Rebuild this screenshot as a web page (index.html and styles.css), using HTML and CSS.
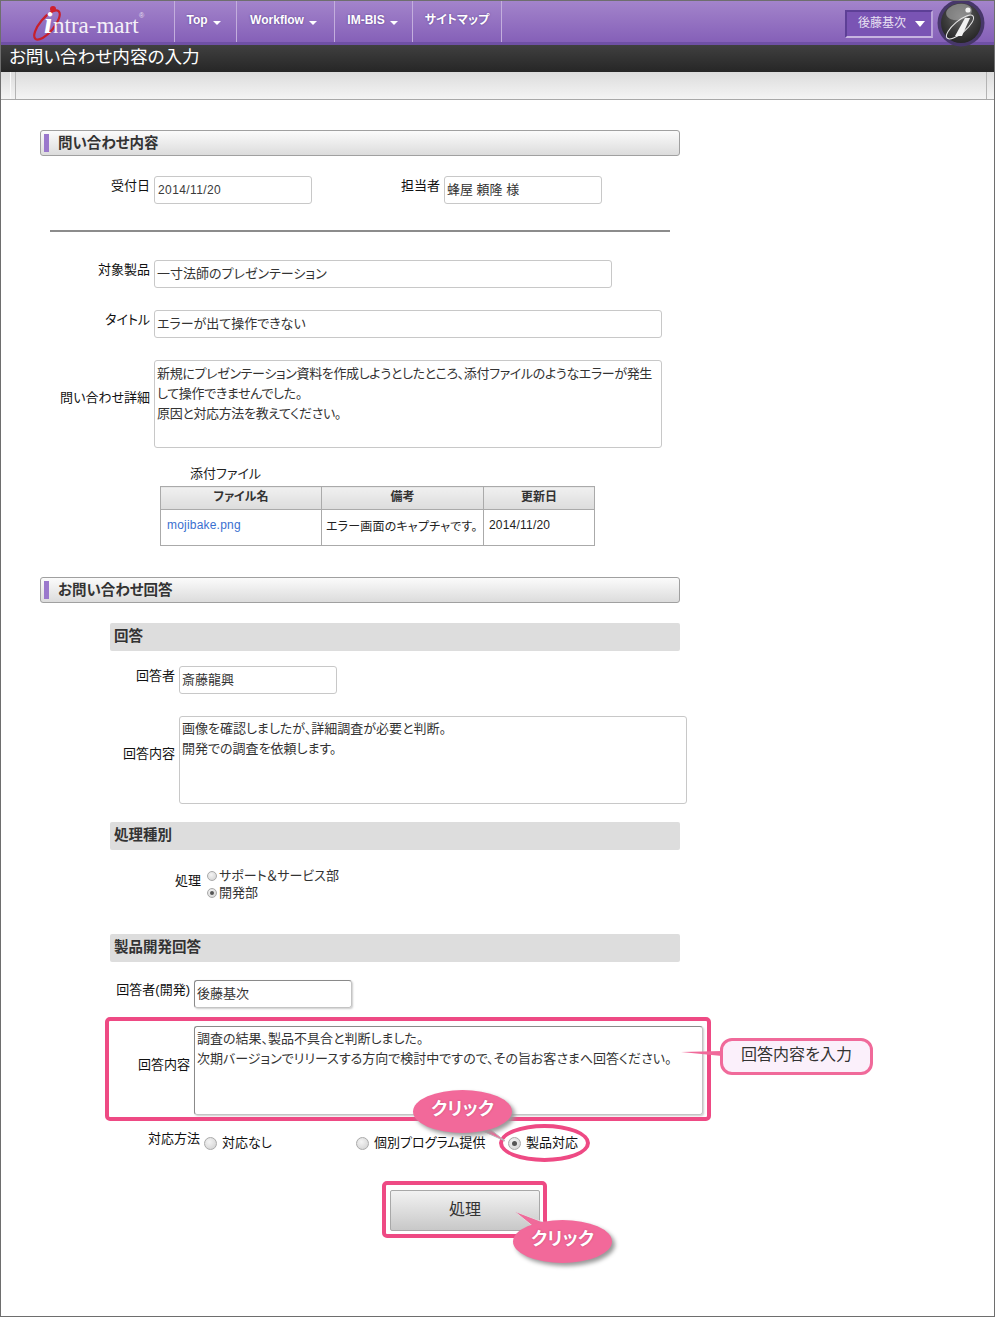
FILE: index.html
```html
<html>

<head>
    <meta charset="utf-8" />
    <link rel="stylesheet" href="styles.css">
</head>

<body>
    <div class="page">
        <div class="header">
            <div class="logo">
                <svg width="130" height="38" viewBox="0 0 130 38">
                    <ellipse cx="24" cy="22" rx="7" ry="18" transform="rotate(40 24 22)" fill="none" stroke="#c8202c" stroke-width="2.2" />
                    <circle cx="30" cy="6" r="3" fill="#d0202c" />
                    <text x="21" y="30" class="logo-i">i</text>
                    <text x="30" y="30" class="logo-text">ntra-mart</text>
                    <text x="116" y="15" class="logo-reg">®</text>
                </svg>
            </div>
            <div class="nav">
                <div class="nav-item nav-top">Top<span class="caret"></span></div>
                <div class="nav-item nav-workflow">Workflow<span class="caret"></span></div>
                <div class="nav-item nav-bis">IM-BIS<span class="caret"></span></div>
                <div class="nav-item nav-map">サイトマップ</div>
            </div>
            <div class="user">
                <div class="user-box">後藤基次<span class="user-caret"></span></div>
                <svg class="user-icon" width="50" height="48" viewBox="0 0 50 48">
                    <defs>
                        <radialGradient id="ball" cx="50%" cy="35%" r="65%">
                            <stop offset="0" stop-color="#6a6a6a" />
                            <stop offset="0.6" stop-color="#3c3c3c" />
                            <stop offset="1" stop-color="#252525" />
                        </radialGradient>
                    </defs>
                    <circle cx="25" cy="23" r="23.5" fill="#47376a" />
                    <circle cx="25" cy="23" r="20" fill="url(#ball)" />
                    <ellipse cx="23" cy="12" rx="13" ry="8" transform="rotate(-10 23 12)" fill="#a8a8a8" opacity="0.6" />
                    <ellipse cx="24" cy="27" rx="6" ry="17" transform="rotate(50 24 27)" fill="none" stroke="#e8e8e8" stroke-width="1" />
                    <path d="M29 18 L34 18 L26 36 L19 36 Z" fill="#f2f2f2" />
                    <circle cx="32" cy="10" r="2.6" fill="#f2f2f2" />
                </svg>
            </div>
        </div>
        <div class="title-bar">お問い合わせ内容の入力</div>
        <div class="toolbar">
            <span class="tool-left"></span>
            <span class="tool-right"></span>
        </div>

        <div class="content">
            <div class="section-head">問い合わせ内容</div>

            <div class="row row-first">
                <div class="label w114">受付日</div>
                <div class="field w158 num">2014/11/20</div>
                <div class="label w100 gap32">担当者</div>
                <div class="field w158">蜂屋 頼隆 様</div>
            </div>
            <div class="rule"></div>
            <div class="row row-product">
                <div class="label w114">対象製品</div>
                <div class="field w458">一寸法師のプレゼンテーション</div>
            </div>
            <div class="row row-gap">
                <div class="label w114">タイトル</div>
                <div class="field w508">エラーが出て操作できない</div>
            </div>
            <div class="row row-gap row-center">
                <div class="label w114">問い合わせ詳細</div>
                <div class="field area tight w508">
                    新規にプレゼンテーション資料を作成しようとしたところ、添付ファイルのようなエラーが発生<br>
                    して操作できませんでした。<br>
                    原因と対応方法を教えてください。
                </div>
            </div>

            <div class="attach-label">添付ファイル</div>
            <table class="files">
                <tr>
                    <th class="col-name">ファイル名</th>
                    <th class="col-note">備考</th>
                    <th>更新日</th>
                </tr>
                <tr>
                    <td class="file-link">mojibake.png</td>
                    <td class="file-note">エラー画面のキャプチャです。</td>
                    <td>2014/11/20</td>
                </tr>
            </table>

            <div class="section-head section-answer">お問い合わせ回答</div>

            <div class="sub-head sub-first">回答</div>
            <div class="row row-sub">
                <div class="label w139">回答者</div>
                <div class="field w158">斎藤龍興</div>
            </div>
            <div class="row row-gap row-center">
                <div class="label w139">回答内容</div>
                <div class="field area w508">
                    画像を確認しましたが、詳細調査が必要と判断。<br>
                    開発での調査を依頼します。
                </div>
            </div>

            <div class="sub-head sub-type">処理種別</div>
            <div class="row row-radios">
                <div class="label w165">処理</div>
                <div class="radio-stack">
                    <div class="radio-line"><span class="radio small"></span>サポート＆サービス部</div>
                    <div class="radio-line"><span class="radio small on"></span>開発部</div>
                </div>
            </div>

            <div class="sub-head sub-dev">製品開発回答</div>
            <div class="row row-dev">
                <div class="label w154">回答者(開発)</div>
                <div class="field w158 dark">後藤基次</div>
            </div>
            <div class="row row-dev-area row-center">
                <div class="label w154">回答内容</div>
                <div class="field area w509 dark">
                    調査の結果、製品不具合と判断しました。<br>
                    次期バージョンでリリースする方向で検討中ですので、その旨お客さまへ回答ください。
                </div>
            </div>

            <div class="row row-method">
                <div class="label w164">対応方法</div>
                <div class="choice choice-a"><span class="radio"></span>対応なし</div>
                <div class="choice choice-b"><span class="radio"></span>個別プログラム提供</div>
                <div class="choice"><span class="radio on"></span>製品対応</div>
            </div>

            <div class="action">
                <div class="button">処理</div>
            </div>
        </div>

        <!-- annotations over the form -->
        <div class="mark mark-answer"></div>
        <div class="mark mark-button"></div>
        <div class="mark-oval"></div>
        <svg class="tails" width="995" height="1317" viewBox="0 0 995 1317">
            <path d="M681 1052 L722 1051 L722 1056 Z" fill="#f06a9a" />
            <path d="M486 1126 L505 1141 L476 1128 Z" fill="#f06a9a" stroke="#bbb" stroke-width="1" />
            <path d="M514 1211 L548 1224 L535 1228 Z" fill="#f06a9a" stroke="#ddd" stroke-width="1" />
        </svg>
        <div class="note">回答内容を入力</div>
        <div class="bubble bubble-a">クリック</div>
        <div class="bubble bubble-b">クリック</div>
    </div>
</body>

</html>
```

FILE: styles.css
```css
body {
    margin: 0;
    background: #fff;
    font-family: "Liberation Sans", "Noto Sans CJK JP", sans-serif;
    font-size: 13px;
    font-feature-settings: "palt";
    color: #222;
}

.page {
    position: relative;
    box-sizing: border-box;
    width: 995px;
    height: 1317px;
    border: 1px solid #6e6e6e;
    overflow: hidden;
}

/* header */
.header {
    display: flex;
    height: 41px;
    border-bottom: 3px solid #6f50a5;
    background: linear-gradient(#a384cb, #8560b8);
}

.logo {
    width: 173px;
    height: 41px;
}

.logo svg {
    display: block;
    margin-left: 22px;
    margin-top: 2px;
}

.logo-i {
    font-family: "Liberation Serif", serif;
    font-size: 30px;
    font-style: italic;
    font-weight: bold;
    fill: #fff;
}

.logo-text {
    font-family: "Liberation Serif", serif;
    font-size: 23px;
    fill: #f4f0f8;
}

.logo-reg {
    font-size: 7px;
    fill: #e8e0f0;
}

.nav {
    display: flex;
    border-left: 1px solid #c3aedd;
}

.nav-item {
    box-sizing: border-box;
    padding-top: 11px;
    border-right: 1px solid #c3aedd;
    color: #fff;
    font-size: 12px;
    font-weight: bold;
    line-height: 16px;
    text-align: center;
    text-shadow: 0 0 2px #5b3f8c;
}

.nav-top {
    width: 62px;
    padding-right: 4px;
}

.nav-workflow {
    width: 98px;
    padding-right: 4px;
}

.nav-bis {
    width: 78px;
    padding-right: 2px;
}

.nav-map {
    width: 89px;
}

.caret {
    display: inline-block;
    margin-left: 5px;
    border-top: 4px solid #fff;
    border-left: 4px solid transparent;
    border-right: 4px solid transparent;
    vertical-align: -1px;
}

.user {
    display: flex;
    margin-left: auto;
    padding-right: 8px;
}

.user-box {
    box-sizing: border-box;
    width: 88px;
    height: 28px;
    margin-top: 9px;
    padding-left: 11px;
    border: 2px solid #5d3f96;
    border-bottom-color: #c7b4e0;
    border-right-color: #b9a3d8;
    background: #7a54b4;
    color: #e8e0f2;
    font-size: 12px;
    line-height: 23px;
}

.user-caret {
    display: inline-block;
    margin-left: 9px;
    border-top: 6px solid #fff;
    border-left: 5px solid transparent;
    border-right: 5px solid transparent;
    vertical-align: 0;
}

.user-icon {
    display: block;
    margin-left: 3px;
    margin-top: -1px;
    position: relative;
    z-index: 1;
}

.title-bar {
    box-sizing: border-box;
    height: 27px;
    padding-left: 8px;
    background: linear-gradient(#404040, #262626);
    color: #fff;
    font-size: 17.6px;
    line-height: 25px;
}

.toolbar {
    display: flex;
    justify-content: space-between;
    box-sizing: border-box;
    height: 28px;
    padding: 0 7px 0 9px;
    border-bottom: 1px solid #a8a8a8;
    background: linear-gradient(#dcdcdc, #f4f4f4);
}

.tool-left {
    width: 4px;
    border-left: 1px solid #fafafa;
    border-right: 1px solid #b4b4b4;
}

.tool-right {
    width: 0;
    border-left: 1px solid #b4b4b4;
}

/* content */
.content {
    padding: 30px 0 0 39px;
}

.section-head {
    box-sizing: border-box;
    width: 640px;
    height: 26px;
    padding-left: 17px;
    border: 1px solid #a0a0a0;
    border-radius: 3px;
    background: linear-gradient(#fbfbfb, #dcdcdc);
    color: #333;
    font-size: 14.5px;
    font-weight: bold;
    line-height: 24px;
    position: relative;
}

.section-head::before {
    content: "";
    position: absolute;
    left: 3px;
    top: 3px;
    width: 5px;
    height: 18px;
    background: #9a78cc;
}

.section-answer {
    margin-top: 31px;
}

.sub-head {
    box-sizing: border-box;
    width: 570px;
    height: 28px;
    margin-left: 70px;
    padding-left: 4px;
    border-radius: 2px;
    background: #dddddd;
    color: #333;
    font-size: 14.5px;
    font-weight: bold;
    line-height: 26px;
}

.sub-first {
    margin-top: 20px;
}

.sub-type {
    margin-top: 18px;
}

.sub-dev {
    margin-top: 33px;
}

.row {
    display: flex;
    align-items: flex-start;
}

.row-first {
    margin-top: 20px;
}

.row-product {
    margin-top: 28px;
}

.row-gap {
    margin-top: 22px;
}

.row-center {
    align-items: center;
}

.row-sub {
    margin-top: 15px;
}

.row-radios {
    margin-top: 17px;
}

.row-dev {
    margin-top: 18px;
}

.row-dev-area {
    margin-top: 18px;
}

.row-method {
    margin-top: 14px;
    height: 20px;
}

.label {
    box-sizing: border-box;
    flex: none;
    padding-right: 4px;
    color: #111;
    line-height: 20px;
    text-align: right;
}

.row-center .label {
    padding-bottom: 12px;
}

.row-radios .label {
    margin-top: 4px;
}

.w100 {
    width: 100px;
}

.w114 {
    width: 114px;
}

.w139 {
    width: 139px;
}

.w154 {
    width: 154px;
}

.w164 {
    width: 164px;
}

.w165 {
    width: 165px;
}

.gap32 {
    margin-left: 32px;
}

.field {
    box-sizing: border-box;
    flex: none;
    height: 28px;
    padding: 3px 2px;
    border: 1px solid #c8c8c8;
    border-radius: 3px;
    color: #333;
    line-height: 20px;
    white-space: nowrap;
}

.field.num {
    padding-left: 3px;
    font-size: 12px;
    letter-spacing: 0.4px;
    color: #3a3a3a;
}

.field.area {
    height: 88px;
    padding: 2px 2px;
}

.field.tight {
    padding-top: 3px;
    letter-spacing: -0.35px;
}

.field.dark {
    border-color: #8a8a8a #c4c4c4 #c4c4c4 #8a8a8a;
    box-shadow: 1px 1px 2px #ccc;
}

.row-dev-area .field.area {
    height: 89px;
}

.w158 {
    width: 158px;
}

.w458 {
    width: 458px;
}

.w508 {
    width: 508px;
}

.w509 {
    width: 509px;
}

.rule {
    width: 620px;
    height: 2px;
    margin: 26px 0 0 10px;
    background: #8c8c8c;
}

.attach-label {
    margin: 14px 0 1px 150px;
    color: #222;
    line-height: 23px;
}

.files {
    width: 435px;
    margin-left: 120px;
    border-collapse: collapse;
    table-layout: fixed;
}

.files th,
.files td {
    border: 1px solid #aaa;
    font-size: 12px;
}

.files th {
    height: 23px;
    padding: 0 0 5px;
    background: linear-gradient(#f0f0f0, #dcdcdc);
    color: #333;
}

.files td {
    height: 36px;
    padding: 0 5px 5px;
    letter-spacing: 0.2px;
    white-space: nowrap;
}

.col-name {
    width: 160px;
}

.col-note {
    width: 161px;
}

.file-link {
    color: #3a6fd0;
}

.files .file-link {
    padding-left: 6px;
}

.files .file-note {
    padding-left: 4px;
    padding-right: 0;
}

.radio-stack {
    margin-left: 2px;
    line-height: 17px;
}

.radio-line {
    display: flex;
    align-items: center;
    height: 17px;
    color: #333;
}

.radio {
    box-sizing: border-box;
    display: inline-block;
    flex: none;
    width: 13px;
    height: 13px;
    border: 1px solid #aaa;
    border-radius: 50%;
    background: radial-gradient(circle at 40% 35%, #f4f4f4, #cfcfcf);
    position: relative;
}

.radio.small {
    width: 10px;
    height: 10px;
    margin-right: 2px;
}

.radio.on::after {
    content: "";
    position: absolute;
    left: 3px;
    top: 3px;
    width: 5px;
    height: 5px;
    border-radius: 50%;
    background: #555;
}

.radio.small.on::after {
    left: 2px;
    top: 2px;
    width: 4px;
    height: 4px;
}

.choice {
    display: flex;
    align-items: center;
    gap: 5px;
    margin-top: 4px;
    color: #111;
    line-height: 20px;
}

.choice-a {
    width: 152px;
}

.choice-b {
    width: 152px;
}

.action {
    margin: 41px 0 0 350px;
}

.button {
    box-sizing: border-box;
    width: 150px;
    height: 41px;
    border: 1px solid #a8a8a8;
    border-radius: 2px;
    background: linear-gradient(#f2f2f2, #c8c8c8);
    color: #333;
    font-size: 16px;
    line-height: 38px;
    text-align: center;
}

/* annotations */
.mark {
    position: absolute;
    box-sizing: border-box;
    border: 4px solid #ee4a84;
    border-radius: 5px;
}

.mark-answer {
    left: 104px;
    top: 1016px;
    width: 606px;
    height: 104px;
}

.mark-button {
    left: 381px;
    top: 1180px;
    width: 165px;
    height: 57px;
}

.mark-oval {
    position: absolute;
    box-sizing: border-box;
    left: 498px;
    top: 1123px;
    width: 91px;
    height: 38px;
    border: 4px solid #ee4a84;
    border-radius: 50%;
}

.tails {
    position: absolute;
    left: -1px;
    top: -1px;
}

.note {
    position: absolute;
    box-sizing: border-box;
    left: 719px;
    top: 1037px;
    width: 153px;
    height: 37px;
    border: 3px solid #f06a9a;
    border-radius: 12px;
    background: #fbf0fb;
    color: #333;
    font-size: 16px;
    line-height: 27px;
    text-align: center;
}

.bubble {
    position: absolute;
    width: 99px;
    height: 43px;
    border-radius: 50%;
    background: #f2699a;
    box-shadow: 3px 3px 4px #999;
    color: #fff;
    font-size: 18px;
    font-weight: bold;
    line-height: 38px;
    text-align: center;
    text-shadow: 0 0 2px #c04070;
}

.bubble-a {
    left: 412px;
    top: 1089px;
}

.bubble-b {
    left: 512px;
    top: 1219px;
}
```
